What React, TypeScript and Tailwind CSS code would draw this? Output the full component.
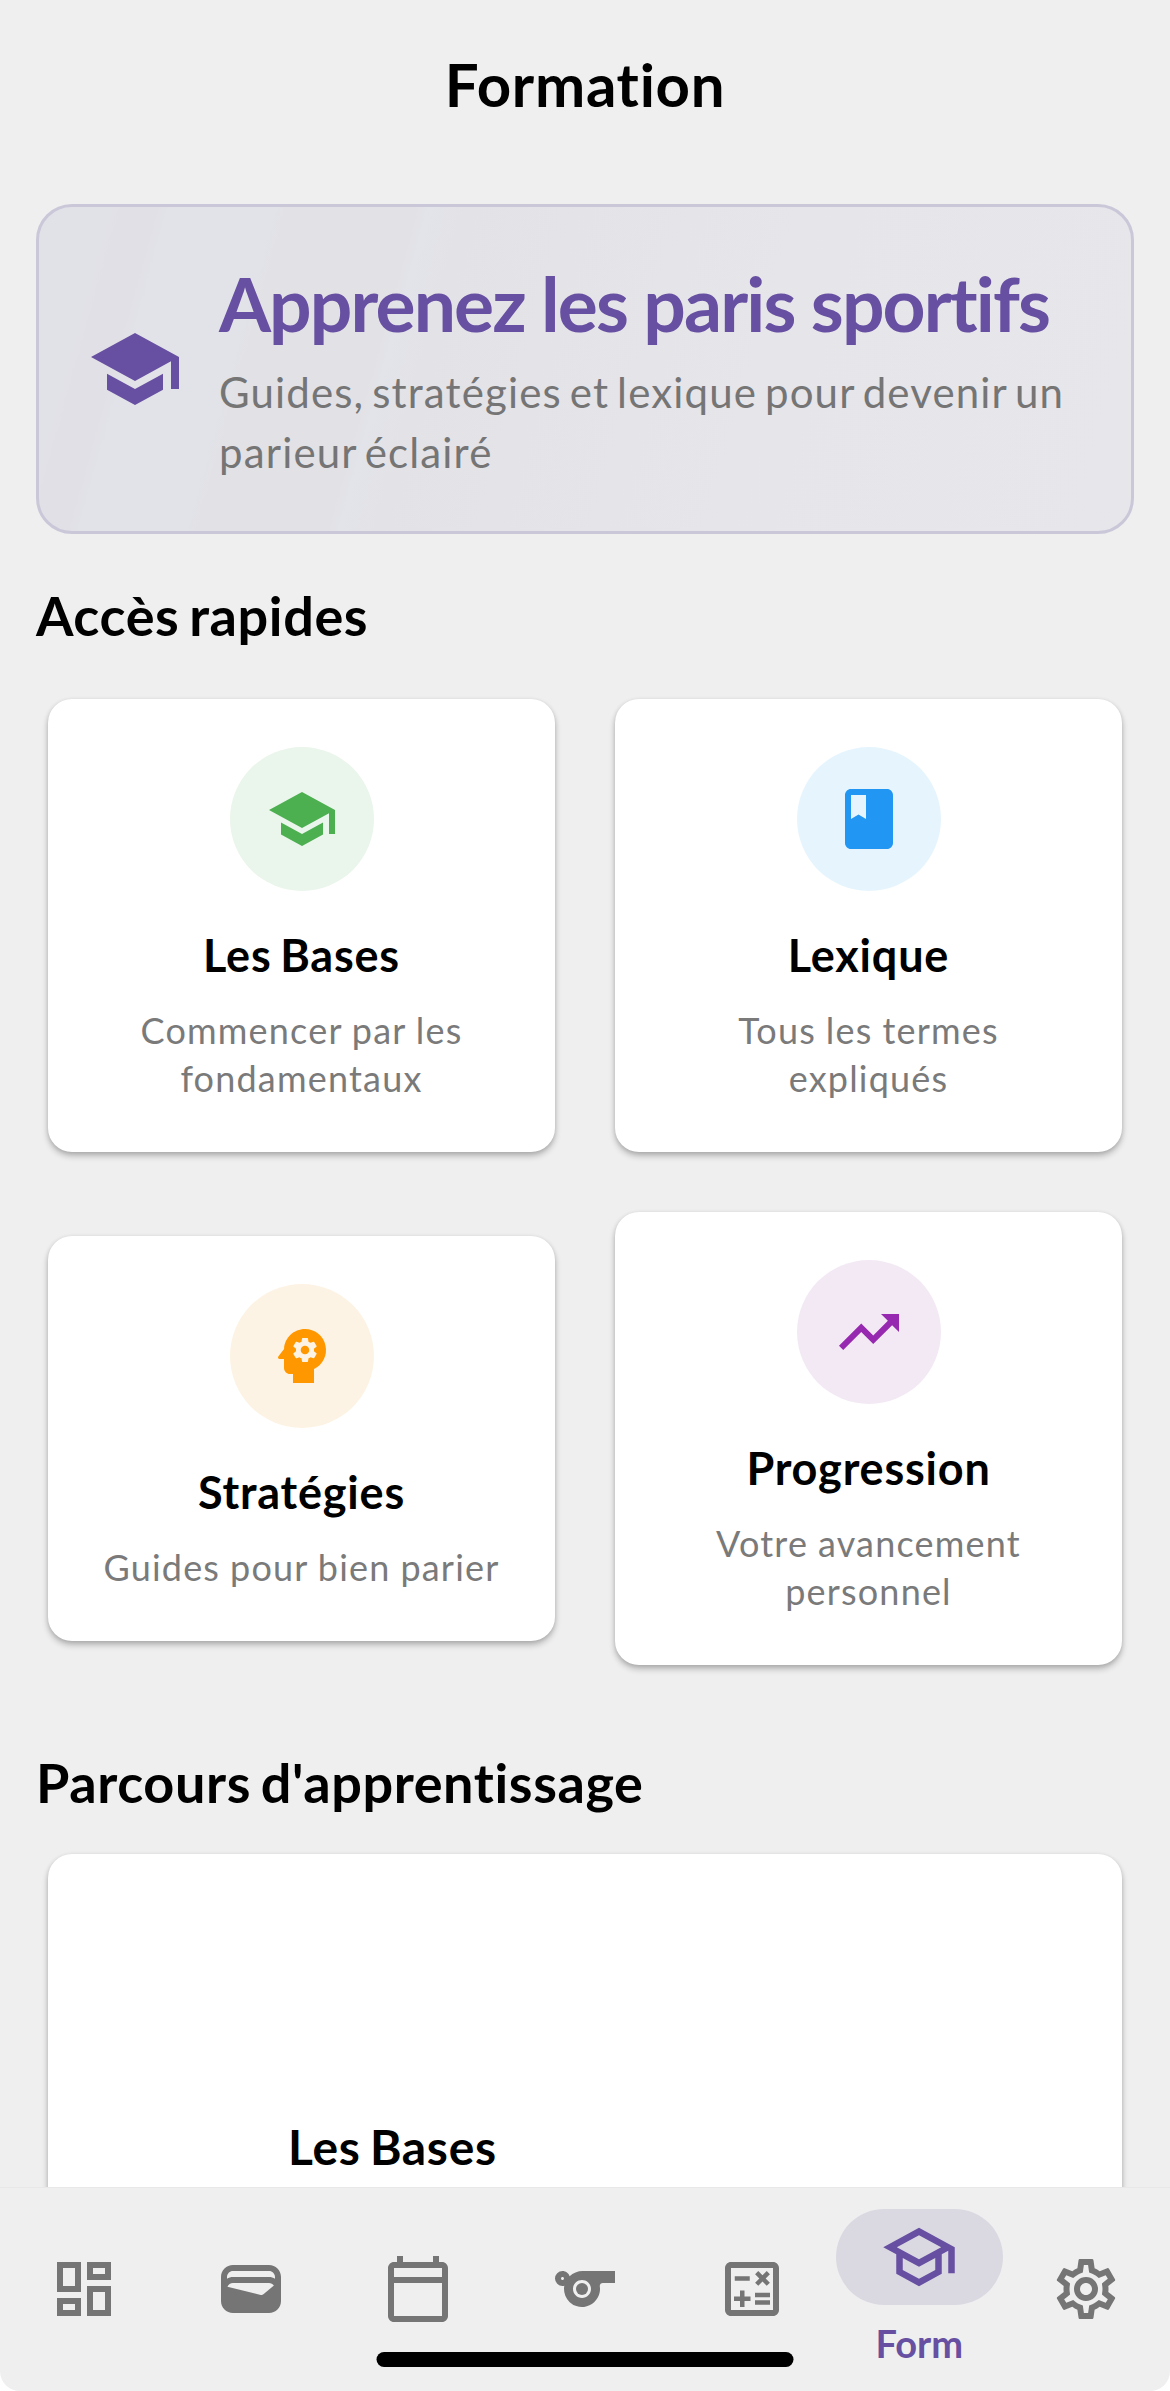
import React from "react";
import { IconType } from "react-icons";
import {
  MdBook,
  MdOutlineCalculate,
  MdOutlineCalendarToday,
  MdOutlineDashboard,
  MdOutlineSchool,
  MdOutlineSettings,
  MdPsychology,
  MdSchool,
  MdSports,
  MdTrendingUp,
  MdWallet,
} from "react-icons/md";

type QuickAccess = {
  title: string;
  description: string;
  icon: IconType;
  iconColor: string;
  circleColor: string;
};

const quickAccess: QuickAccess[] = [
  {
    title: "Les Bases",
    description: "Commencer par les fondamentaux",
    icon: MdSchool,
    iconColor: "text-[#4caf50]",
    circleColor: "bg-[#eaf5eb]",
  },
  {
    title: "Lexique",
    description: "Tous les termes expliqués",
    icon: MdBook,
    iconColor: "text-[#2196f3]",
    circleColor: "bg-[#e6f5fd]",
  },
  {
    title: "Stratégies",
    description: "Guides pour bien parier",
    icon: MdPsychology,
    iconColor: "text-[#ff9800]",
    circleColor: "bg-[#fdf3e4]",
  },
  {
    title: "Progression",
    description: "Votre avancement personnel",
    icon: MdTrendingUp,
    iconColor: "text-[#9729b0]",
    circleColor: "bg-[#f3e9f5]",
  },
];

const navItems: { icon: IconType; label: string; active?: boolean }[] = [
  { icon: MdOutlineDashboard, label: "Dashboard" },
  { icon: MdWallet, label: "Bankroll" },
  { icon: MdOutlineCalendarToday, label: "Calendrier" },
  { icon: MdSports, label: "Sports" },
  { icon: MdOutlineCalculate, label: "Calcul" },
  { icon: MdOutlineSchool, label: "Form", active: true },
  { icon: MdOutlineSettings, label: "Réglages" },
];

const cardStyle =
  "rounded-[24px] bg-white shadow-[0_4px_6px_rgba(0,0,0,0.24),0_1px_4px_rgba(0,0,0,0.1)]";

const QuickAccessCard: React.FC<{ item: QuickAccess }> = ({ item }) => {
  const Icon = item.icon;
  return (
    <div
      className={`${cardStyle} flex flex-col items-center px-12 pt-12 pb-[50px] text-center`}
    >
      <div
        className={`flex size-36 items-center justify-center rounded-full ${item.circleColor}`}
      >
        <Icon className={`size-[72px] ${item.iconColor}`} />
      </div>
      <h3 className="mt-[34px] text-[45px] leading-[60px] font-bold tracking-[0.8px] [word-spacing:-3px]">
        {item.title}
      </h3>
      <p className="mt-[21px] text-[36px] leading-[48px] tracking-[1.2px] text-[#7a7a7a] [word-spacing:-0.5px]">
        {item.description}
      </p>
    </div>
  );
};

const SectionTitle: React.FC<{ children: React.ReactNode }> = ({
  children,
}) => (
  <h2 className="px-9 text-[54px] leading-[72px] font-bold tracking-[0.6px] [word-spacing:-4px]">
    {children}
  </h2>
);

const Banner: React.FC = () => (
  <section className="mx-9 flex h-[330px] items-center gap-9 rounded-[36px] border-[3px] border-[#cac7d9] bg-[linear-gradient(105.5deg,#e1e2e8_0%,#e1e2e8_6%,#e1e0e6_7%,#e1e0e6_10%,#e1e3e8_11%,#e1e3e8_20%,#e2e1e6_21%,#e2e1e6_32%,#e2e4e9_33%,#e3e2e7_36%,#e6e5ea_65%,#e7e6eb_100%)] px-12">
    <MdSchool className="size-24 shrink-0 text-[#674fa1]" />
    <div className="flex-1">
      <h2 className="text-[75px] leading-[96px] font-bold tracking-[-1.9px] whitespace-nowrap text-[#674fa1]">
        Apprenez les paris sportifs
      </h2>
      <p className="mt-[11px] mb-px text-[42px] leading-[60px] tracking-[1.15px] [word-spacing:-4px] text-[#757575]">
        Guides, stratégies et lexique pour devenir un parieur éclairé
      </p>
    </div>
  </section>
);

const BottomNav: React.FC = () => (
  <nav className="relative flex h-[204px] shrink-0 rounded-b-[20px] border-t border-[#e8e8e8] bg-[#efefef]">
    {navItems.map(({ icon: Icon, label, active }) =>
      active ? (
        <div key={label} className="flex flex-1 flex-col items-center pt-[21px]">
          <div className="flex h-24 w-full items-center justify-center rounded-full bg-[#dad9e2]">
            <Icon className="size-[78px] text-[#674fa1]" />
          </div>
          <span className="mt-[14px] text-[38px] leading-[48px] font-bold text-[#674fa1]">
            {label}
          </span>
        </div>
      ) : (
        <div
          key={label}
          aria-label={label}
          className="flex flex-1 items-center justify-center pb-[2px]"
        >
          <Icon className="size-[72px] text-[#757575]" />
        </div>
      ),
    )}
    {/* home indicator */}
    <div className="absolute bottom-6 left-1/2 h-[15px] w-[417px] -translate-x-1/2 rounded-full bg-black" />
  </nav>
);

const App: React.FC = () => {
  return (
    <div className="h-[2391px] w-[1170px] overflow-hidden bg-white font-['Lato',sans-serif] text-black [font-variant-ligatures:none]">
      <div className="flex h-full flex-col">
        <main className="min-h-0 flex-1 overflow-hidden bg-[#efefef]">
          <header className="flex h-[204px] justify-center pt-[48px]">
            <h1 className="text-[60px] leading-[72px] font-bold tracking-[0.7px]">
              Formation
            </h1>
          </header>

          <Banner />

          <div className="mt-[46px] mb-[47px]">
            <SectionTitle>Accès rapides</SectionTitle>
          </div>
          <div className="mx-12 grid grid-cols-2 items-center gap-[60px]">
            {quickAccess.map((item) => (
              <QuickAccessCard key={item.title} item={item} />
            ))}
          </div>

          <div className="mt-[82px] mb-[35px]">
            <SectionTitle>Parcours d'apprentissage</SectionTitle>
          </div>
          <div className={`${cardStyle} mx-12 h-[600px] px-[240px] pt-[263px]`}>
            <h3 className="text-[48px] leading-[60px] font-bold tracking-[0.7px] [word-spacing:-3px]">
              Les Bases
            </h3>
          </div>
        </main>
        <BottomNav />
      </div>
    </div>
  );
};

export default App;
